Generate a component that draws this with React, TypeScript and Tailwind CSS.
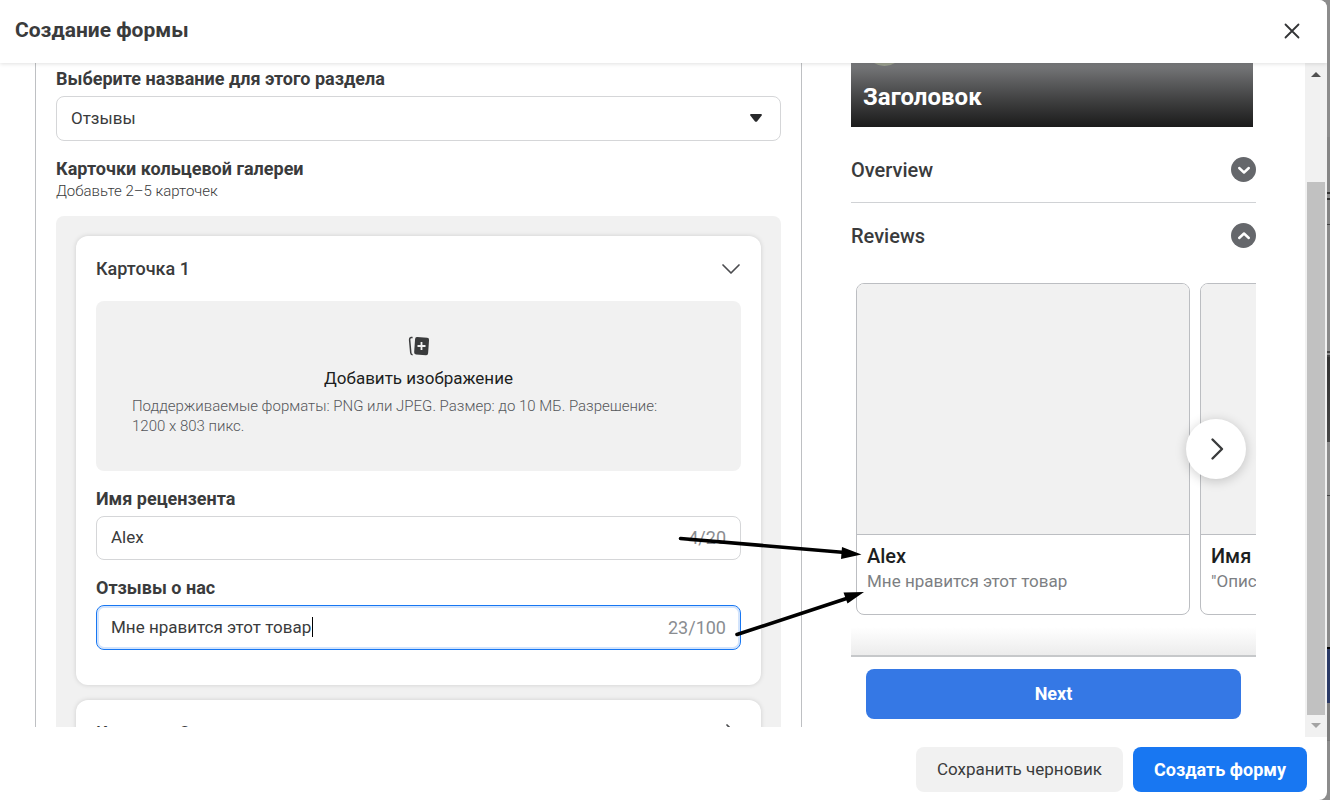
import { useState } from "react"
import type { ReactNode } from "react"
import { clsx } from "clsx"

// What shows of the dimmed page to the right of the dialog
const backdropRows = [
  { id: "top", className: "h-[137px] bg-[#8c8c8c]" },
  { id: "toolbar", className: "h-[55px] bg-[#868686]" },
  { id: "line-1", className: "h-2 border-y-2 border-[#333333] bg-[#8c8c8c]" },
  { id: "cell", className: "h-[25px] border-b border-[#444444] bg-[#858585]" },
  { id: "body", className: "h-[126px] bg-[#8a8a8a]" },
  { id: "line-2", className: "h-[6px] border-y-2 border-[#444444] bg-[#8c8c8c]" },
  { id: "image", className: "h-[85px] bg-gradient-to-b from-[#333333] to-[#484848]" },
  { id: "body-2", className: "h-[54px] border-b border-[#444444] bg-[#8c8c8c]" },
  { id: "body-3", className: "h-[151px] bg-[#8a8a8a]" },
  { id: "blue", className: "h-[56px] border-t-2 border-black bg-[#2b3a66]" },
  { id: "foot", className: "h-[38px] border-b border-[#777777] bg-[#7e7e7e]" },
  { id: "bottom", className: "flex-1 bg-[#8c8c8c]" },
]

const previewCards = [
  { id: 1, title: "Alex", text: "Мне нравится этот товар" },
  { id: 2, title: "Имя рецензента", text: "\"Описание\"" },
]

function Chevron({ className }: { className?: string }) {
  return (
    <svg viewBox="0 0 20 20" fill="none" stroke="currentColor" strokeWidth="1.7" strokeLinecap="round" strokeLinejoin="round" className={className}>
      <path d="M2 6l8 8 8-8" />
    </svg>
  )
}

function AddImageIcon() {
  return (
    <svg viewBox="0 0 24 24" className="h-6 w-6 text-[#3a3b3c]">
      <path d="M5.6 3.4L4.1 3.6Q2.4 3.9 2.6 5.6L3.8 19Q4 20.6 5.6 20.7" fill="none" stroke="currentColor" strokeWidth="1.5" />
      <rect x="7.6" y="3.4" width="14" height="17.4" rx="2" transform="rotate(4 14.6 12)" fill="currentColor" />
      <path d="M14.5 8v8M10.5 12h8" stroke="#f1f1f1" strokeWidth="1.8" />
    </svg>
  )
}

type TextFieldProps = {
  id: string
  label: string
  value: string
  max: number
  active?: boolean
  onChange: (value: string) => void
}

function TextField({ id, label, value, max, active, onChange }: TextFieldProps) {
  return (
    <div>
      <label htmlFor={id} className="mb-[5px] block text-lg leading-6 font-bold">
        {label}
      </label>
      <div
        className={clsx(
          "relative flex items-center rounded-lg border px-[14px]",
          active ? "h-[45px] border-[#1877f2] inset-ring-2 inset-ring-[#d3e4fc]" : "h-11 border-[#d5d6d8]",
        )}
      >
        <input
          id={id}
          value={value}
          maxLength={max}
          onChange={(e) => onChange(e.target.value)}
          className="min-w-0 flex-1 bg-transparent text-[17px] outline-none"
        />
        <span className="text-lg text-[#8a8d91]">
          {value.length}/{max}
        </span>
        {active && <span className="absolute top-[11px] left-[215px] h-5 w-px bg-black" />}
      </div>
    </div>
  )
}

function FormCard({ title, icon, children }: { title: string; icon: ReactNode; children?: ReactNode }) {
  return (
    <section className="rounded-xl bg-white px-5 pt-5 pb-[35px] shadow-[0_0_5px_rgba(0,0,0,0.14)]">
      <div className="mb-5 flex h-[25px] items-center justify-between">
        <h3 className="text-lg font-medium">{title}</h3>
        <button type="button" aria-label={title} className="text-[#4b4c4f]">
          {icon}
        </button>
      </div>
      {children}
    </section>
  )
}

function PreviewSection({ title, open }: { title: string; open?: boolean }) {
  return (
    <button type="button" className="flex h-[65px] w-full items-center justify-between text-left">
      <span className="text-xl font-medium">{title}</span>
      <span className="flex h-[25px] w-[25px] items-center justify-center rounded-full bg-[#65676b] text-white">
        <svg viewBox="0 0 12 12" fill="none" stroke="currentColor" strokeWidth="2.4" strokeLinecap="round" strokeLinejoin="round" className={clsx("h-3 w-3", open && "rotate-180")}>
          <path d="M1.2 4L6 8.5 10.800 4" />
        </svg>
      </span>
    </button>
  )
}

function Preview({ name, review }: { name: string; review: string }) {
  return (
    <div className="w-[405px] shrink-0">
      <div className="relative mr-[3px] flex h-16 items-center overflow-hidden bg-gradient-to-b from-[#7a7b7d] to-[#1b1b1b] px-3 pt-1">
        <span className="absolute -top-9 left-[14px] h-[39px] w-[39px] rounded-full border-3 border-[#9a9f8e] bg-[#6c7a2c]" />
        <h2 className="text-2xl font-bold text-white">Заголовок</h2>
      </div>
      <div className="pt-[10px]">
        <div className="border-b border-[#d0d2d5]">
          <PreviewSection title="Overview" />
        </div>
        <PreviewSection title="Reviews" open />
      </div>
      <div className="relative mt-[15px]">
        <div className="flex gap-[10px] overflow-hidden pl-[5px]">
          {previewCards.map((card) => (
            <article key={card.id} className="w-[334px] shrink-0 overflow-hidden rounded-lg border border-[#bcbec2]">
              <div className="h-[251px] border-b border-[#bcbec2] bg-[#f1f1f1]" />
              <div className="h-[79px] px-[10px] pt-2">
                <h4 className="text-xl leading-[26px] font-medium text-[#1c1e21]">{card.id === 1 ? name : card.title}</h4>
                <p className="text-[17px] leading-6 text-[#7d7f83]">{card.id === 1 ? review : card.text}</p>
              </div>
            </article>
          ))}
        </div>
        <button
          type="button"
          aria-label="Next card"
          className="absolute top-[136px] right-[10px] flex h-[60px] w-[60px] items-center justify-center rounded-full bg-white shadow-[0_2px_12px_rgba(0,0,0,0.2)]"
        >
          <svg viewBox="0 0 24 24" fill="none" stroke="#3a3b3c" strokeWidth="2.4" strokeLinecap="round" strokeLinejoin="round" className="h-6 w-6">
            <path d="M8.5 2.5L18 12l-9.500 9.500" />
          </svg>
        </button>
      </div>
      <div className="mt-3 h-[30px] border-b-2 border-[#c6c8ca] bg-gradient-to-b from-white to-[#ececec]" />
      <div className="px-[15px] pt-3">
        <button type="button" className="h-[50px] w-full rounded-lg bg-[#3578e5] text-lg font-bold text-white">
          Next
        </button>
      </div>
    </div>
  )
}

function Scrollbar() {
  return (
    <div className="flex w-[22px] shrink-0 flex-col items-center bg-[#f1f1f1]">
      <svg viewBox="0 0 22 22" className="h-[22px] w-[22px]">
        <path d="M6 14l5-5 5 5z" fill="#505050" />
      </svg>
      <div className="mt-[97px] w-[18px] flex-1 bg-[#c1c1c1]" />
      <svg viewBox="0 0 22 22" className="h-[22px] w-[22px]">
        <path d="M6 8l5 5 5-5z" fill="#a3a3a3" />
      </svg>
    </div>
  )
}

// Arrows from the form fields to the matching preview texts
function Arrows() {
  return (
    <svg width="200" height="120" viewBox="670 530 200 120" className="pointer-events-none absolute top-[530px] left-[670px]">
      <path d="M680.500 538.500L845 552.500M737 634.500L848 598" stroke="#000" strokeWidth="3.600" strokeLinecap="round" />
      <path d="M861.500 554.500L841 559 842 547zM864 592L847.500 603.500 843.500 592.500z" fill="#000" />
    </svg>
  )
}

export default function App() {
  const [section, setSection] = useState("Отзывы")
  const [name, setName] = useState("Alex")
  const [review, setReview] = useState("Мне нравится этот товар")

  return (
    <div className="relative flex h-screen overflow-hidden bg-[#8c8c8c] font-[Roboto,'Liberation_Sans',sans-serif] text-[#3a3b3c]">
      <div role="dialog" aria-label="Создание формы" className="z-10 flex min-w-0 flex-1 flex-col overflow-hidden rounded-r-lg bg-white">
        <header className="z-10 flex h-[63px] shrink-0 items-center justify-between bg-white pr-[25px] pb-[2px] pl-[15px] shadow-[0_1px_4px_rgba(0,0,0,0.12)]">
          <h1 className="text-[21px] font-bold">Создание формы</h1>
          <button type="button" aria-label="Закрыть">
            <svg viewBox="0 0 20 20" fill="none" stroke="#333436" strokeWidth="1.800" strokeLinecap="round" className="h-5 w-5">
              <path d="M3.500 3.500l13 13M16.500 3.500L3.500 16.500" />
            </svg>
          </button>
        </header>

        <div className="flex min-h-0 flex-1">
          <div className="mb-[10px] flex min-w-0 flex-1 gap-[49px] overflow-hidden pr-[49px] pl-[35px]">
            {/* Form */}
            <div className="min-w-0 flex-1 border-x border-[#bec0c3] px-5 pt-1">
              <label htmlFor="section" className="mb-[5px] block text-lg leading-6 font-bold">
                Выберите название для этого раздела
              </label>
              <div className="relative">
                <select
                  id="section"
                  value={section}
                  onChange={(e) => setSection(e.target.value)}
                  className="h-[45px] w-full appearance-none rounded-lg border border-[#d5d6d8] bg-white px-[14px] text-[17px]"
                >
                  <option>Отзывы</option>
                </select>
                <svg viewBox="0 0 12 8" className="pointer-events-none absolute top-[18px] right-[19px] h-2 w-3">
                  <path d="M1 0h10q1.500.5.5 1.800L7 7.400q-1 .8-2 0L.5 1.800Q-.5.5 1 0z" fill="#28292b" />
                </svg>
              </div>

              <h2 className="mt-4 text-lg leading-6 font-bold">Карточки кольцевой галереи</h2>
              <p className="text-[15px] leading-5 font-light text-[#3a3b3c]">Добавьте 2–5 карточек</p>

              <div className="mt-[15px] flex flex-col gap-[15px] rounded-lg bg-[#f1f1f1] p-5">
                <FormCard title="Карточка 1" icon={<Chevron className="h-5 w-5" />}>
                  <div className="flex flex-col gap-4">
                    <button type="button" className="flex h-[170px] flex-col items-center rounded-lg bg-[#f1f1f1] px-9 pt-[33px]">
                      <AddImageIcon />
                      <span className="mt-2 text-[17px] leading-6 text-[#1c1e21]">Добавить изображение</span>
                      <span className="mt-[6px] w-full pr-5 text-left text-[15px] leading-5 font-light text-[#55575b]">
                        Поддерживаемые форматы: PNG или JPEG. Размер: до 10 МБ. Разрешение: 1200 x 803 пикс.
                      </span>
                    </button>
                    <TextField id="reviewer" label="Имя рецензента" value={name} max={20} onChange={setName} />
                    <TextField id="review" label="Отзывы о нас" value={review} max={100} active onChange={setReview} />
                  </div>
                </FormCard>
                <FormCard title="Карточка 2" icon={<Chevron className="h-5 w-5 -rotate-90" />} />
              </div>
            </div>

            <Preview name={name} review={review} />
          </div>
          <Scrollbar />
        </div>

        <footer className="flex shrink-0 justify-end gap-[10px] pt-[10px] pr-5 pb-2">
          <button type="button" className="h-[45px] rounded-lg bg-[#f1f1f1] px-[21px] text-[17px]">
            Сохранить черновик
          </button>
          <button type="button" className="h-[45px] rounded-lg bg-[#1877f2] px-[21px] text-lg font-bold text-white">
            Создать форму
          </button>
        </footer>
      </div>

      <div className="flex w-[3px] shrink-0 flex-col">
        {backdropRows.map((row) => (
          <div key={row.id} className={row.className} />
        ))}
      </div>
      <div className="z-20">
        <Arrows />
      </div>
    </div>
  )
}
